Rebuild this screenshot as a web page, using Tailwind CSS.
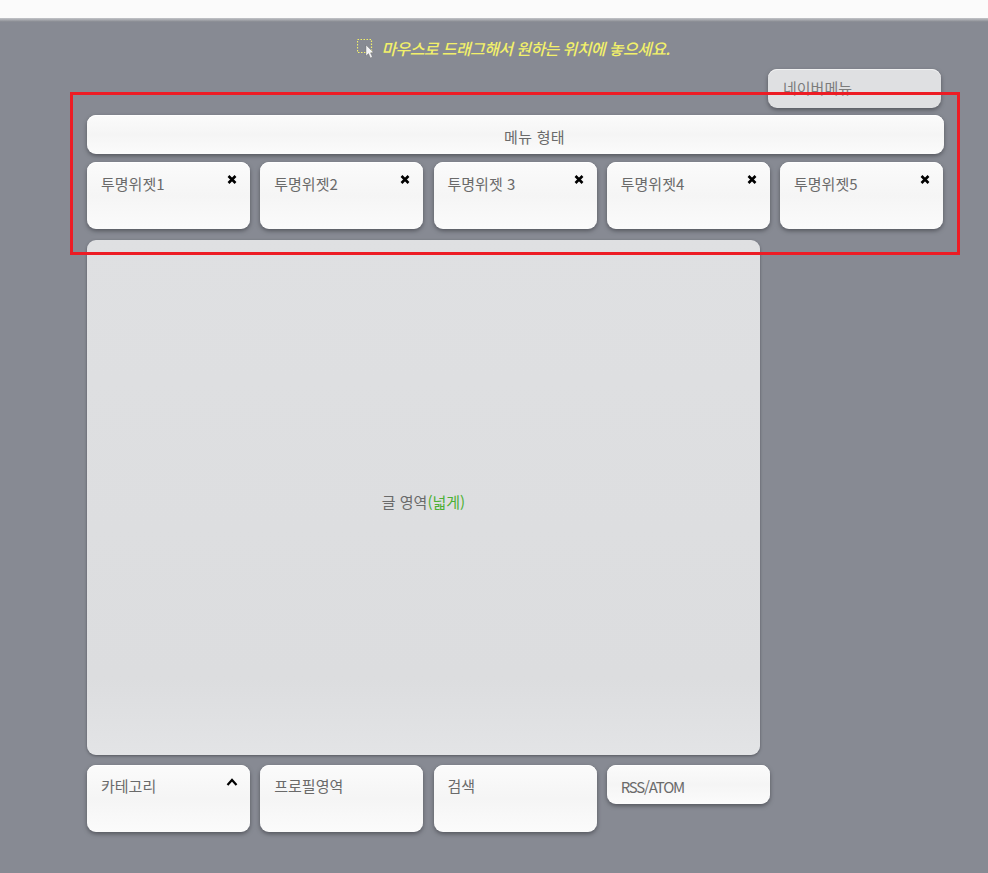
<!DOCTYPE html>
<html lang="ko">
<head>
    <meta charset="UTF-8">
    <title>위젯 배치</title>
    <script src="https://cdn.jsdelivr.net/npm/@tailwindcss/browser@4"></script>
</head>
<body class="relative h-[873px] w-[988px] overflow-hidden bg-[#878a93] font-['Noto_Sans_CJK_KR','Noto_Sans',sans-serif] text-[15px] text-[#6a6a6a]">
    <!-- Top bar -->
    <div class="h-[22px] border-t-[18px] border-[#fbfbfb] bg-gradient-to-b from-[#c4c5c9] to-[#85888f]"></div>

    <!-- Hint -->
    <div class="flex h-[47px] items-start justify-center pl-[38px] pt-[14px]">
        <div class="flex items-center gap-[7px]">
            <svg width="18" height="20" viewBox="0 0 18 20" class="mt-[2px]">
                <rect x="0.5" y="0.5" width="14" height="13" fill="none" stroke="#f2f06a" stroke-width="1.2" stroke-dasharray="1.5 1.5"/>
                <path d="M9 6 L9 17 L11.5 14.6 L13.4 19 L15.4 18 L13.5 13.8 L16.6 13.6 Z" fill="#f4f4f6" stroke="#666" stroke-width="0.4"/>
            </svg>
            <p class="text-[16px] font-medium italic leading-6 tracking-[-0.6px] text-[#f2f06a]">마우스로 드래그해서 원하는 위치에 놓으세요.</p>
        </div>
    </div>

    <main class="flex flex-col pl-[87px]">
        <!-- Nav menu -->
        <div class="flex justify-end pr-[47px]">
            <div class="h-[39px] w-[173px] rounded-[9px] bg-[#dfe0e2] pl-[15px] pt-[8px] text-[#7c7c7c] shadow-[inset_0_1px_0_#f0f0f1,0_2px_4px_#55575e]">네이버메뉴</div>
        </div>

        <!-- Menu -->
        <div class="mt-[7px] flex h-[39px] w-[857px] items-center justify-center rounded-[9px] bg-gradient-to-b from-[#fbfbfb] via-[#f5f5f5] to-[#fbfbfb] pl-[38px] pt-[5px] tracking-[0.3px] shadow-[inset_0_1px_0_#fff,0_2px_4px_#55575e]">메뉴 형태</div>

        <!-- Transparent widgets -->
        <div class="mt-[8px] flex gap-[10.25px]">
            <div class="relative h-[67px] w-[163px] rounded-[9px] bg-gradient-to-b from-[#fbfbfb] via-[#f5f5f5] to-[#fbfbfb] pl-[14px] pt-[11px] shadow-[inset_0_1px_0_#fff,0_2px_4px_#55575e]">투명위젯1
                <svg width="10" height="9" viewBox="0 0 10 9" class="absolute right-[13px] top-[13px]"><path d="M1.5 1 L8.5 8 M8.5 1 L1.5 8" stroke="#000" stroke-width="2.6"/></svg>
            </div>
            <div class="relative h-[67px] w-[163px] rounded-[9px] bg-gradient-to-b from-[#fbfbfb] via-[#f5f5f5] to-[#fbfbfb] pl-[14px] pt-[11px] shadow-[inset_0_1px_0_#fff,0_2px_4px_#55575e]">투명위젯2
                <svg width="10" height="9" viewBox="0 0 10 9" class="absolute right-[13px] top-[13px]"><path d="M1.5 1 L8.5 8 M8.5 1 L1.5 8" stroke="#000" stroke-width="2.6"/></svg>
            </div>
            <div class="relative h-[67px] w-[163px] rounded-[9px] bg-gradient-to-b from-[#fbfbfb] via-[#f5f5f5] to-[#fbfbfb] pl-[14px] pt-[11px] shadow-[inset_0_1px_0_#fff,0_2px_4px_#55575e]">투명위젯 3
                <svg width="10" height="9" viewBox="0 0 10 9" class="absolute right-[13px] top-[13px]"><path d="M1.5 1 L8.5 8 M8.5 1 L1.5 8" stroke="#000" stroke-width="2.6"/></svg>
            </div>
            <div class="relative h-[67px] w-[163px] rounded-[9px] bg-gradient-to-b from-[#fbfbfb] via-[#f5f5f5] to-[#fbfbfb] pl-[14px] pt-[11px] shadow-[inset_0_1px_0_#fff,0_2px_4px_#55575e]">투명위젯4
                <svg width="10" height="9" viewBox="0 0 10 9" class="absolute right-[13px] top-[13px]"><path d="M1.5 1 L8.5 8 M8.5 1 L1.5 8" stroke="#000" stroke-width="2.6"/></svg>
            </div>
            <div class="relative h-[67px] w-[163px] rounded-[9px] bg-gradient-to-b from-[#fbfbfb] via-[#f5f5f5] to-[#fbfbfb] pl-[14px] pt-[11px] shadow-[inset_0_1px_0_#fff,0_2px_4px_#55575e]">투명위젯5
                <svg width="10" height="9" viewBox="0 0 10 9" class="absolute right-[13px] top-[13px]"><path d="M1.5 1 L8.5 8 M8.5 1 L1.5 8" stroke="#000" stroke-width="2.6"/></svg>
            </div>
        </div>

        <!-- Post area -->
        <div class="mt-[11px] flex h-[515px] w-[673px] items-center justify-center rounded-[9px] bg-gradient-to-b from-[#dfe0e2] via-[#dcdddf] via-85% to-[#e3e4e6] pt-[10px] shadow-[0_1px_3px_#55575e]">
            <p>글 영역<span class="text-[#4cb034]">(넓게)</span></p>
        </div>

        <!-- Bottom widgets -->
        <div class="mt-[10px] flex items-start gap-[10.25px]">
            <div class="relative h-[67px] w-[163px] rounded-[9px] bg-gradient-to-b from-[#fbfbfb] via-[#f5f5f5] to-[#fbfbfb] pl-[14px] pt-[10px] shadow-[inset_0_1px_0_#fff,0_2px_4px_#55575e]">카테고리
                <svg width="12" height="8" viewBox="0 0 12 8" class="absolute right-[12px] top-[13px]"><path d="M1.5 7 L6 2 L10.5 7" fill="none" stroke="#000" stroke-width="2.2"/></svg>
            </div>
            <div class="h-[67px] w-[163px] rounded-[9px] bg-gradient-to-b from-[#fbfbfb] via-[#f5f5f5] to-[#fbfbfb] pl-[14px] pt-[10px] shadow-[inset_0_1px_0_#fff,0_2px_4px_#55575e]">프로필영역</div>
            <div class="h-[67px] w-[163px] rounded-[9px] bg-gradient-to-b from-[#fbfbfb] via-[#f5f5f5] to-[#fbfbfb] pl-[14px] pt-[10px] shadow-[inset_0_1px_0_#fff,0_2px_4px_#55575e]">검색</div>
            <div class="h-[39px] w-[163px] rounded-[9px] bg-gradient-to-b from-[#fbfbfb] via-[#f5f5f5] to-[#fbfbfb] pl-[14px] pt-[11px] tracking-[-1.2px] shadow-[inset_0_1px_0_#fff,0_2px_4px_#55575e]">RSS/ATOM</div>
        </div>
    </main>

    <!-- Red annotation -->
    <div class="pointer-events-none absolute left-[70px] top-[92px] h-[163px] w-[890px] border-[3px] border-[#ed1c24]"></div>
</body>
</html>
